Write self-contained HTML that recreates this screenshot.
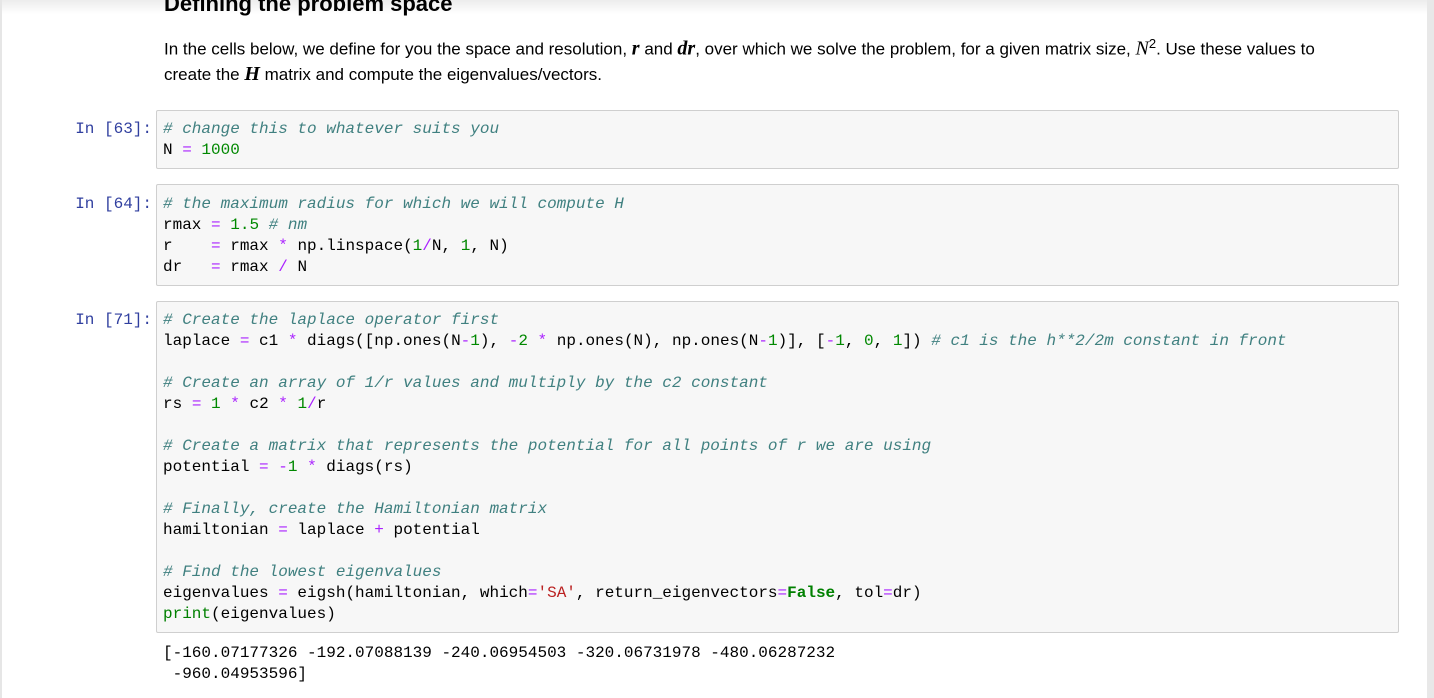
<!DOCTYPE html>
<html><head><meta charset="utf-8"><style>
html,body{margin:0;padding:0;width:1434px;height:698px;overflow:hidden;background:#fff}
body{position:relative;font-family:"Liberation Sans",sans-serif}
.lstrip{position:absolute;left:0;top:0;width:2px;height:698px;background:#e6e6e6}
.rstrip{position:absolute;right:0;top:0;width:7px;height:698px;background:#e8e8e8}
.topsh{position:absolute;left:0;top:0;width:1427px;height:14px;background:linear-gradient(#ececec,#fff)}
h2{position:absolute;left:164px;top:-9px;margin:0;font-size:22px;font-weight:bold;color:#000}
.p{position:absolute;left:164px;top:31px;width:1200px;font-size:17px;line-height:25px;color:#000}
.m{font-family:"Liberation Serif",serif;font-style:italic;font-weight:bold;font-size:20px}
.cell{position:absolute;left:156px;width:1241px;background:#f7f7f7;border:1px solid #cfcfcf;border-radius:2px}
pre{margin:0;font-family:"Liberation Mono",monospace;font-size:16px;line-height:21px;color:#000}
.code{position:absolute;left:163px}
.pr{position:absolute;right:1282px;font-family:"Liberation Mono",monospace;font-size:16px;color:#303F9F;white-space:pre}
.c{color:#408080;font-style:italic}.o{color:#AA22FF}.n{color:#008800}.s{color:#BA2121}.b{color:#008000}.k{color:#008000;font-weight:bold}
</style></head><body>
<div class="topsh"></div><div class="lstrip"></div><div class="rstrip"></div>
<h2>Defining the problem space</h2>
<div class="p">In the cells below, we define for you the space and resolution, <span class="m">r</span> and <span class="m">dr</span>, over which we solve the problem, for a given matrix size, <span class="m" style="font-weight:normal">N</span><sup style="font-size:13px">2</sup>. Use these values to<br>create the <span class="m">H</span> matrix and compute the eigenvalues/vectors.</div>

<div class="cell" style="top:110px;height:57px"></div>
<div class="pr" style="top:120px">In [63]:</div>
<pre class="code" style="top:119px"><span class="c"># change this to whatever suits you</span>
N <span class="o">=</span> <span class="n">1000</span></pre>

<div class="cell" style="top:184px;height:100px"></div>
<div class="pr" style="top:195px">In [64]:</div>
<pre class="code" style="top:194px"><span class="c"># the maximum radius for which we will compute H</span>
rmax <span class="o">=</span> <span class="n">1.5</span> <span class="c"># nm</span>
r    <span class="o">=</span> rmax <span class="o">*</span> np.linspace(<span class="n">1</span><span class="o">/</span>N, <span class="n">1</span>, N)
dr   <span class="o">=</span> rmax <span class="o">/</span> N</pre>

<div class="cell" style="top:301px;height:330px"></div>
<div class="pr" style="top:311px">In [71]:</div>
<pre class="code" style="top:310px"><span class="c"># Create the laplace operator first</span>
laplace <span class="o">=</span> c1 <span class="o">*</span> diags([np.ones(N<span class="o">-</span><span class="n">1</span>), <span class="o">-</span><span class="n">2</span> <span class="o">*</span> np.ones(N), np.ones(N<span class="o">-</span><span class="n">1</span>)], [<span class="o">-</span><span class="n">1</span>, <span class="n">0</span>, <span class="n">1</span>]) <span class="c"># c1 is the h**2/2m constant in front</span>

<span class="c"># Create an array of 1/r values and multiply by the c2 constant</span>
rs <span class="o">=</span> <span class="n">1</span> <span class="o">*</span> c2 <span class="o">*</span> <span class="n">1</span><span class="o">/</span>r

<span class="c"># Create a matrix that represents the potential for all points of r we are using</span>
potential <span class="o">=</span> <span class="o">-</span><span class="n">1</span> <span class="o">*</span> diags(rs)

<span class="c"># Finally, create the Hamiltonian matrix</span>
hamiltonian <span class="o">=</span> laplace <span class="o">+</span> potential

<span class="c"># Find the lowest eigenvalues</span>
eigenvalues <span class="o">=</span> eigsh(hamiltonian, which<span class="o">=</span><span class="s">'SA'</span>, return_eigenvectors<span class="o">=</span><span class="k">False</span>, tol<span class="o">=</span>dr)
<span class="b">print</span>(eigenvalues)</pre>

<pre class="code" style="top:643px">[-160.07177326 -192.07088139 -240.06954503 -320.06731978 -480.06287232
 -960.04953596]</pre>
</body></html>
